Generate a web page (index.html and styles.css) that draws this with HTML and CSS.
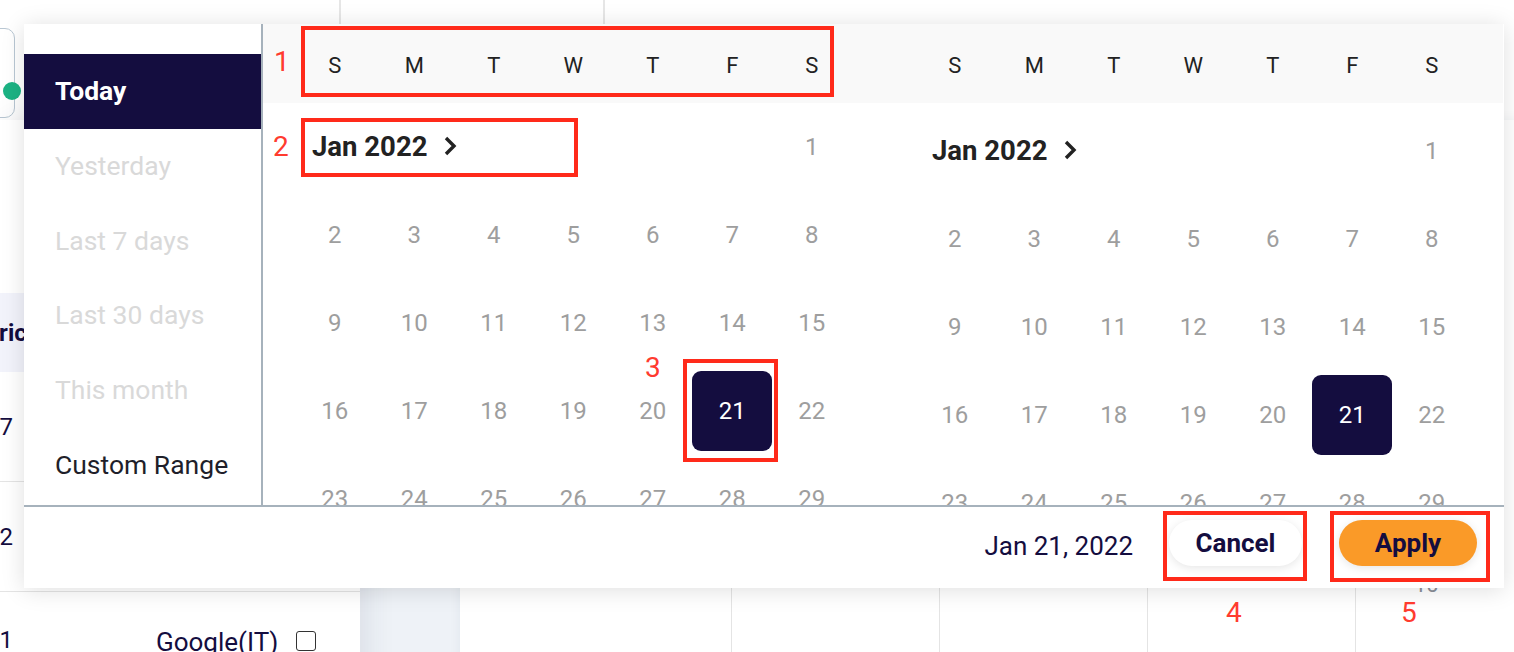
FILE: index.html
```html
<!DOCTYPE html>
<html>
<head>
<meta charset="utf-8">
<link rel="stylesheet" href="styles.css">
</head>
<body>
<div class="page">
  <div class="bg">
    <div class="bg-header">
      <div class="hcell hcell-a"><div class="inputbox"><span class="dot"></span></div></div>
      <div class="hcell hcell-b"></div>
      <div class="hcell hcell-c"></div>
    </div>
    <div class="bg-main">
      <div class="left-panel">
        <div class="lp-gap"></div>
        <div class="lp-head"><span class="lp-head-text">Metric</span></div>
        <div class="lp-row"><span class="lp-cut">17</span></div>
        <div class="lp-row"><span class="lp-cut">12</span></div>
        <div class="lp-row lp-last"><span class="lp-cut">11</span><span class="lp-src">Google(IT)</span><span class="lp-check"></span></div>
      </div>
      <div class="gutter"></div>
      <div class="right-panel">
        <div class="rp-col rp-col1"></div>
        <div class="rp-col"></div>
        <div class="rp-col"></div>
        <div class="rp-col"></div>
        <div class="rp-col rp-last"><span class="rp-num">10</span></div>
      </div>
    </div>
  </div>

  <div class="popup">
    <div class="popup-body">
      <div class="sidebar">
        <div class="range active">Today</div>
        <div class="range muted">Yesterday</div>
        <div class="range muted">Last 7 days</div>
        <div class="range muted">Last 30 days</div>
        <div class="range muted">This month</div>
        <div class="range">Custom Range</div>
      </div>
      <div class="calendars">
        <div class="cal">
          <div class="weekdays"><span>S</span><span>M</span><span>T</span><span>W</span><span>T</span><span>F</span><span>S</span></div>
          <div class="days">
            <div class="month">Jan 2022 <svg class="chev" width="16" height="22" viewBox="0 0 16 22"><path d="M4 3 L12 11 L4 19" fill="none" stroke="#222" stroke-width="3.4"/></svg></div>
            <div class="day">1</div>
            <div class="day">2</div><div class="day">3</div><div class="day">4</div><div class="day">5</div><div class="day">6</div><div class="day">7</div><div class="day">8</div>
            <div class="day">9</div><div class="day">10</div><div class="day">11</div><div class="day">12</div><div class="day">13</div><div class="day">14</div><div class="day">15</div>
            <div class="day">16</div><div class="day">17</div><div class="day">18</div><div class="day">19</div><div class="day">20</div><div class="day"><span class="sel">21</span></div><div class="day">22</div>
            <div class="day">23</div><div class="day">24</div><div class="day">25</div><div class="day">26</div><div class="day">27</div><div class="day">28</div><div class="day">29</div>
            <div class="day">30</div><div class="day">31</div>
          </div>
        </div>
        <div class="cal cal-right">
          <div class="weekdays"><span>S</span><span>M</span><span>T</span><span>W</span><span>T</span><span>F</span><span>S</span></div>
          <div class="days">
            <div class="month">Jan 2022 <svg class="chev" width="16" height="22" viewBox="0 0 16 22"><path d="M4 3 L12 11 L4 19" fill="none" stroke="#222" stroke-width="3.4"/></svg></div>
            <div class="day">1</div>
            <div class="day">2</div><div class="day">3</div><div class="day">4</div><div class="day">5</div><div class="day">6</div><div class="day">7</div><div class="day">8</div>
            <div class="day">9</div><div class="day">10</div><div class="day">11</div><div class="day">12</div><div class="day">13</div><div class="day">14</div><div class="day">15</div>
            <div class="day">16</div><div class="day">17</div><div class="day">18</div><div class="day">19</div><div class="day">20</div><div class="day"><span class="sel">21</span></div><div class="day">22</div>
            <div class="day">23</div><div class="day">24</div><div class="day">25</div><div class="day">26</div><div class="day">27</div><div class="day">28</div><div class="day">29</div>
            <div class="day">30</div><div class="day">31</div>
          </div>
        </div>
      </div>
    </div>
    <div class="footer">
      <span class="picked">Jan 21, 2022</span>
      <button class="btn btn-cancel">Cancel</button>
      <button class="btn btn-apply">Apply</button>
    </div>
  </div>

  <div class="mark box1"></div>
  <div class="mark box2"></div>
  <div class="mark box3"></div>
  <div class="mark box4"></div>
  <div class="mark box5"></div>
  <span class="num n1">1</span>
  <span class="num n2">2</span>
  <span class="num n3">3</span>
  <span class="num n4">4</span>
  <span class="num n5">5</span>
</div>
</body>
</html>
```

FILE: styles.css
```css
* { box-sizing: border-box; }
html, body { margin: 0; padding: 0; }
body {
  font-family: Roboto, "Liberation Sans", sans-serif;
  width: 1514px;
  height: 652px;
  overflow: hidden;
  background: #eef2f7;
}
.page {
  position: relative;
  width: 1514px;
  height: 652px;
  overflow: hidden;
}

/* ---------- background page ---------- */
.bg {
  display: flex;
  flex-direction: column;
  width: 1514px;
  height: 652px;
}
.bg-header {
  flex: none;
  height: 120px;
  display: flex;
  background: #fff;
}
.hcell { height: 100%; flex: none; }
.hcell-a { width: 339px; }
.hcell-b { width: 264px; border-left: 2px solid #e6e6e6; }
.hcell-c { flex: 1; border-left: 2px solid #e6e6e6; }
.inputbox {
  position: relative;
  margin-left: -30px;
  margin-top: 28px;
  width: 45px;
  height: 90px;
  border: 1.5px solid #b9c7d3;
  border-radius: 10px;
}
.dot {
  position: absolute;
  right: -7px;
  top: 53px;
  width: 18px;
  height: 18px;
  border-radius: 50%;
  background: #1cb384;
}
.bg-main {
  flex: 1;
  display: flex;
}
.left-panel {
  flex: none;
  width: 360px;
  background: #fff;
  box-shadow: 6px 0 28px rgba(40, 50, 80, 0.1);
  display: flex;
  flex-direction: column;
  color: #140d3f;
  font-size: 24px;
  overflow: hidden;
  position: relative;
  z-index: 1;
}
.lp-gap { height: 173px; flex: none; }
.lp-head {
  flex: none;
  height: 79px;
  background: #f2f3fb;
  display: flex;
  align-items: center;
  font-weight: 700;
}
.lp-head-text { margin-left: -43px; }
.lp-row {
  flex: none;
  height: 110px;
  border-bottom: 1.5px solid #e4e4e4;
  display: flex;
  align-items: center;
}
.lp-cut { margin-left: -14px; }
.lp-last { align-items: flex-start; padding-top: 34px; border-bottom: 0; }
.lp-src { margin-left: 143px; font-size: 26px; margin-top: 1px; }
.lp-check {
  margin-left: 18px;
  margin-top: 5px;
  width: 20px;
  height: 20px;
  border: 1.5px solid #333;
  border-radius: 3px;
}
.gutter { width: 100px; flex: none; }
.right-panel {
  flex: 1;
  margin-right: 24px;
  background: #fff;
  display: flex;
  box-shadow: 0 0 12px rgba(40, 50, 80, 0.06);
}
.rp-col { flex: none; width: 208px; border-left: 1.5px solid #e4e4e4; }
.rp-col1 { width: 271px; border-left: 0; }
.rp-last { flex: 1; position: relative; }
.rp-num {
  position: absolute;
  left: 58px;
  top: 452px;
  font-size: 22px;
  color: #8a8f99;
}

/* ---------- popup ---------- */
.popup {
  position: absolute;
  left: 24px;
  top: 24px;
  width: 1480px;
  height: 564px;
  background: #fff;
  box-shadow: 0 2px 22px rgba(0, 0, 0, 0.13);
  display: flex;
  flex-direction: column;
  z-index: 2;
}
.popup-body {
  flex: none;
  height: 483px;
  display: flex;
  border-bottom: 2px solid #a6b2bc;
  overflow: hidden;
}
.sidebar {
  flex: none;
  width: 239px;
  border-right: 2px solid #a6b2bc;
  padding-top: 30px;
  display: flex;
  flex-direction: column;
}
.range {
  flex: none;
  height: 74.7px;
  display: flex;
  align-items: center;
  padding-left: 31px;
  padding-bottom: 1px;
  font-size: 26.5px;
  color: #1f1f2a;
}
.range.active {
  background: #140d3f;
  color: #fff;
  font-weight: 700;
}
.range.muted { color: #d9d9d9; }

.calendars {
  display: flex;
  flex: 1;
}
.cal {
  flex: none;
  width: 620px;
  display: flex;
  flex-direction: column;
}
.weekdays {
  flex: none;
  height: 79px;
  background: #f9f9f9;
  display: grid;
  grid-template-columns: repeat(7, 79.5px);
  padding-left: 32px;
  align-items: center;
  font-size: 22px;
  color: #222;
  padding-top: 3px;
}
.weekdays span { text-align: center; }
.days {
  flex: none;
  display: grid;
  grid-template-columns: repeat(7, 79.5px);
  grid-auto-rows: 88px;
  padding-left: 32px;
}
.cal-right .days { padding-top: 4px; }
.month {
  grid-column: 1 / span 6;
  display: flex;
  align-items: center;
  padding-left: 17px;
  padding-bottom: 2px;
  font-size: 27.5px;
  font-weight: 700;
  color: #222;
  white-space: pre;
}
.chev { margin-left: 8px; }
.day {
  display: flex;
  align-items: center;
  justify-content: center;
  font-size: 24px;
  color: #9e9e9e;
}
.sel {
  width: 80px;
  height: 80px;
  flex: none;
  border-radius: 9px;
  background: #140d3f;
  color: #fff;
  display: flex;
  align-items: center;
  justify-content: center;
}

.footer {
  flex: 1;
  display: flex;
  align-items: center;
  justify-content: flex-end;
  padding-right: 27px;
  padding-bottom: 9px;
}
.picked {
  font-size: 26px;
  color: #140d3f;
  margin-right: 36px;
  margin-top: 6px;
}
.btn {
  font-family: Roboto, "Liberation Sans", sans-serif;
  font-size: 26px;
  font-weight: 700;
  color: #140d3f;
  height: 46px;
  border: 0;
  border-radius: 23px;
  padding: 0;
  box-shadow: 0 2px 10px rgba(0, 0, 0, 0.1);
}
.btn-cancel { width: 133px; background: #fff; margin-right: 37px; }
.btn-apply { width: 138px; background: #fa9a28; }

/* ---------- annotations ---------- */
.mark {
  position: absolute;
  z-index: 3;
  border: 4px solid #ff2a1a;
}
.box1 { left: 301px; top: 26px; width: 533px; height: 71px; }
.box2 { left: 301px; top: 118px; width: 277px; height: 59px; }
.box3 { left: 683px; top: 359px; width: 95px; height: 103px; }
.box4 { left: 1163px; top: 511px; width: 144px; height: 70px; }
.box5 { left: 1330px; top: 511px; width: 160px; height: 71px; }
.num {
  position: absolute;
  z-index: 3;
  font-size: 28px;
  color: #ff3b2f;
  line-height: 1;
}
.n1 { left: 274px; top: 48px; }
.n2 { left: 273px; top: 133px; }
.n3 { left: 645px; top: 354px; }
.n4 { left: 1226px; top: 599px; }
.n5 { left: 1401px; top: 599px; }
```
